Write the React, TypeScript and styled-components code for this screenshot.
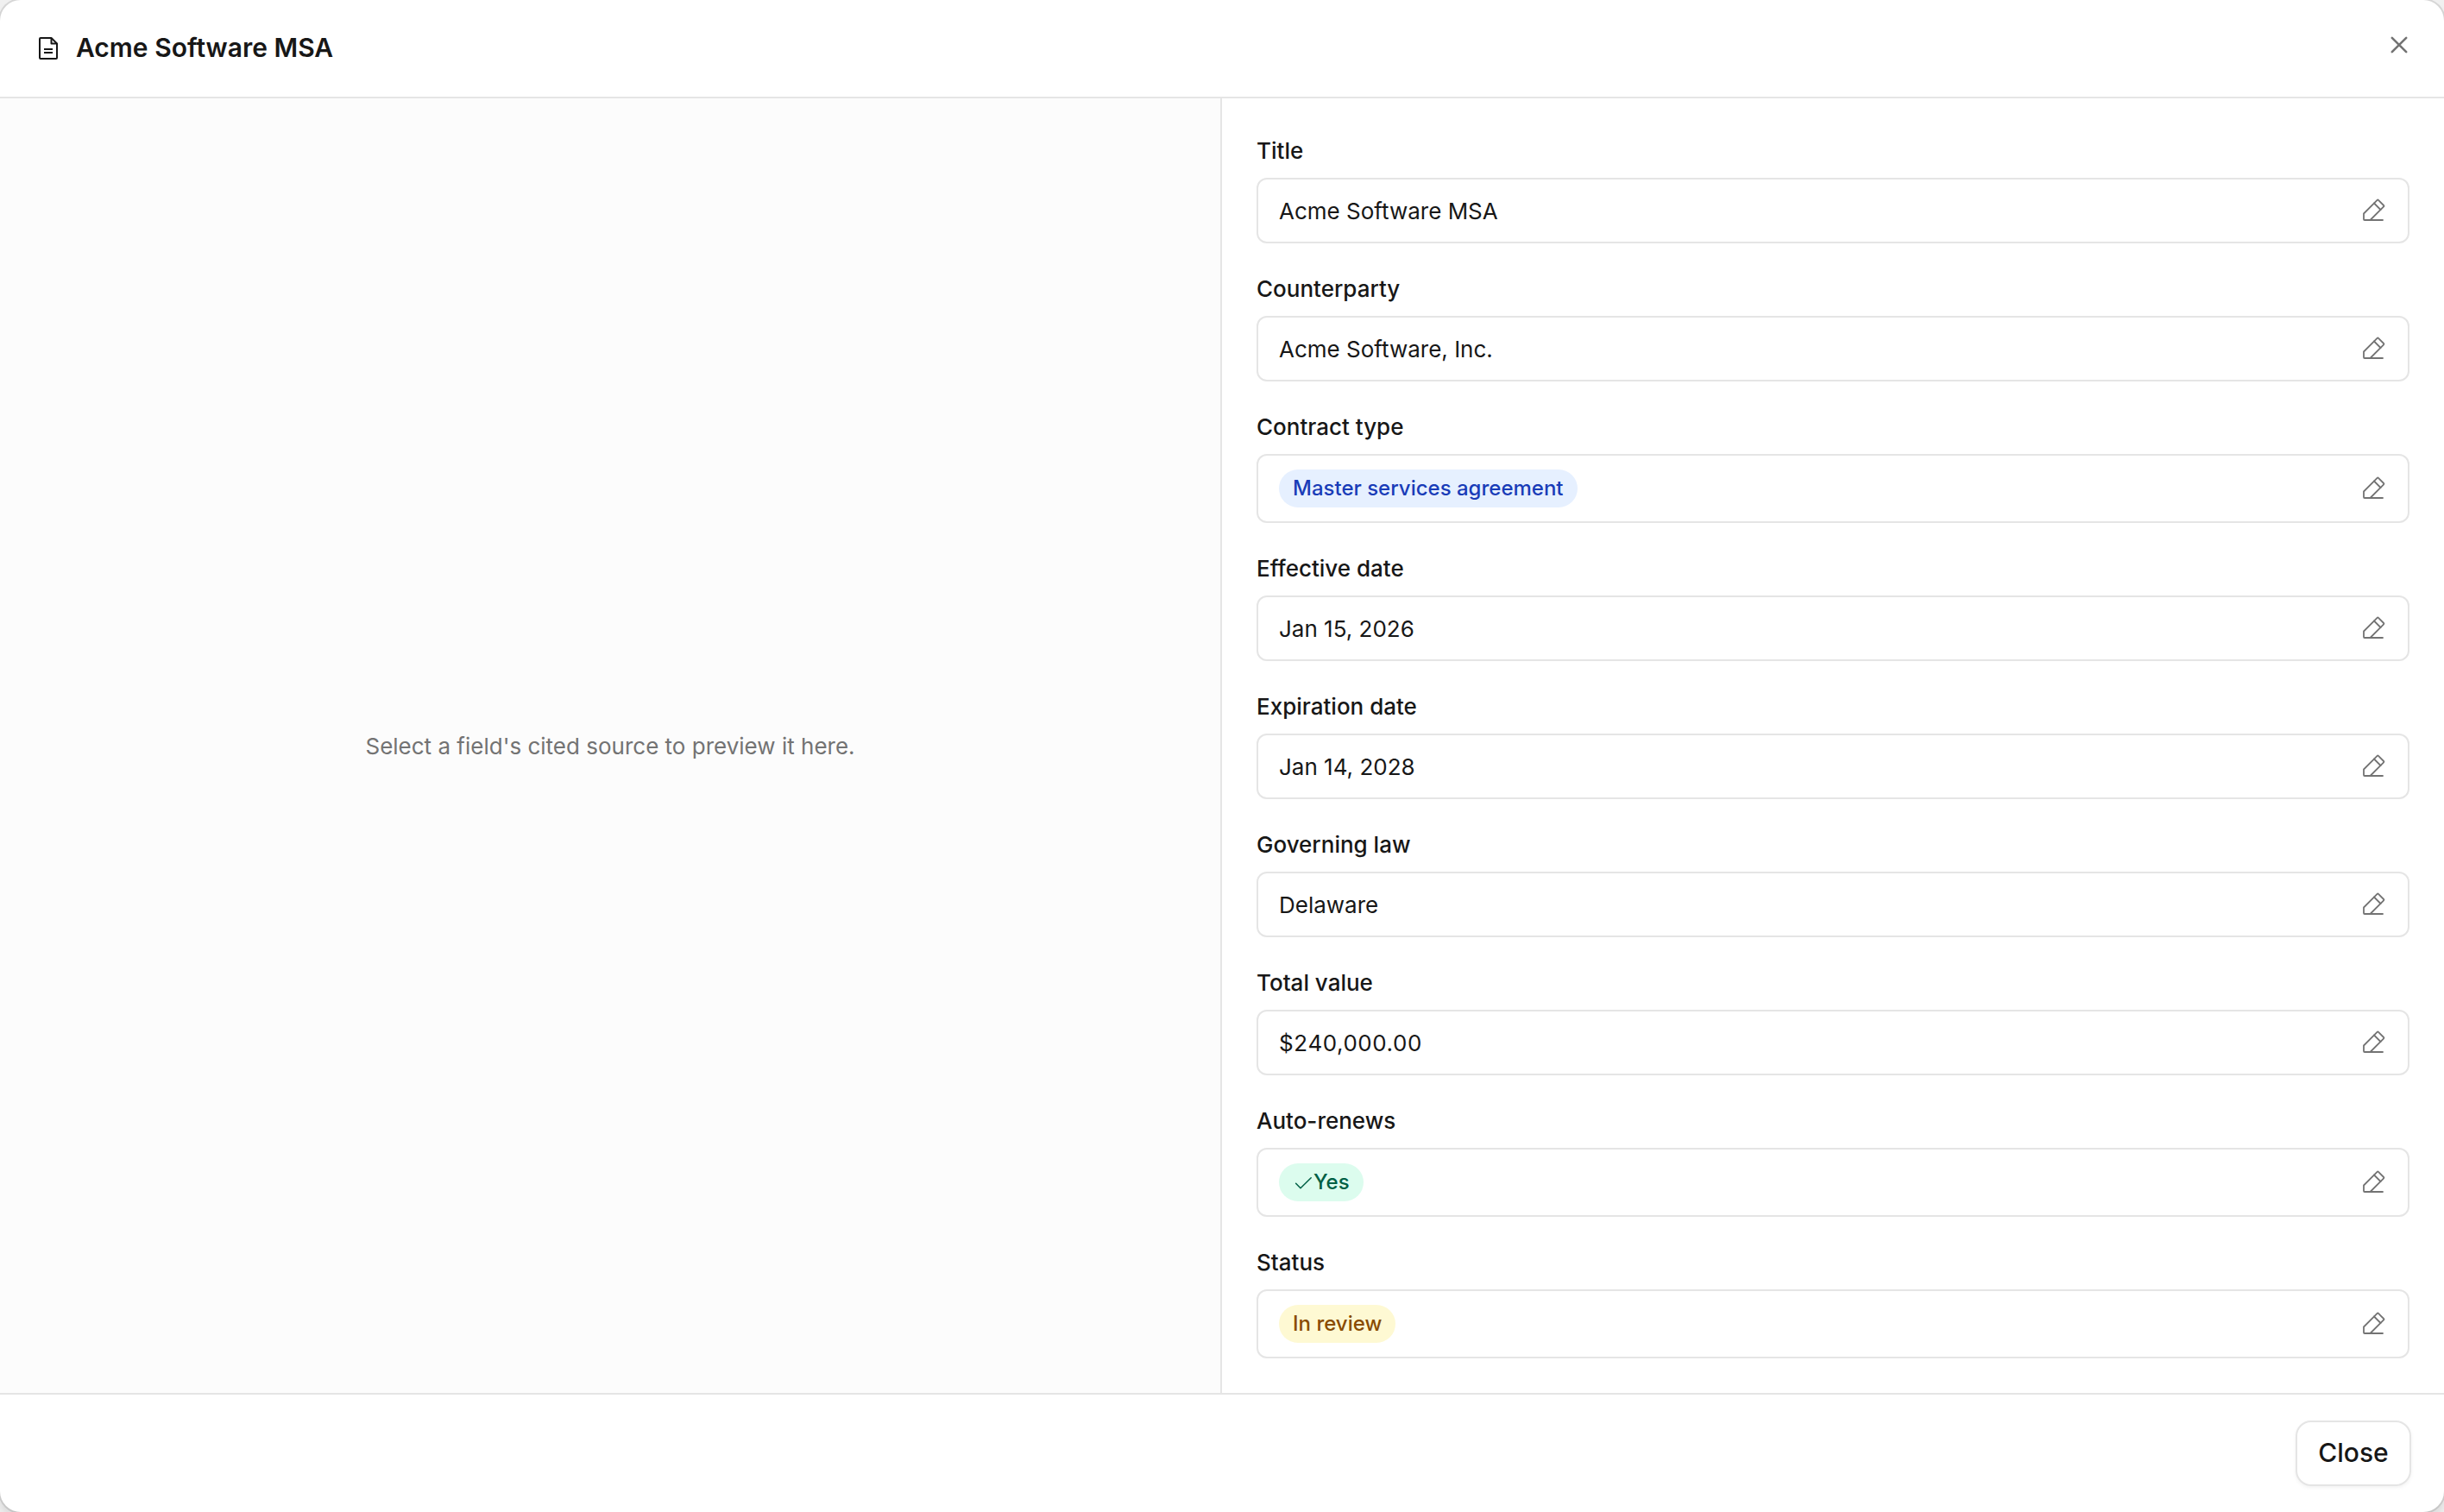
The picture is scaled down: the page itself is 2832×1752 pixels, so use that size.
import React from 'react';
import styled, { createGlobalStyle } from 'styled-components';

type Tone = 'blue' | 'green' | 'yellow';

interface ContractField {
  label: string;
  value: string;
  tone?: Tone;
  checked?: boolean;
  numeric?: boolean;
}

const colors = {
  text: '#171717',
  muted: '#737373',
  border: '#e5e5e5',
  panel: '#fcfcfc',
  surface: '#ffffff',
  backdrop: '#f0f0f0',
};

const tones: Record<Tone, { background: string; color: string }> = {
  blue: { background: '#e6f0ff', color: '#193cb8' },
  green: { background: '#dcfcee', color: '#006045' },
  yellow: { background: '#fef9d3', color: '#894b00' },
};

const fields: ContractField[] = [
  { label: 'Title', value: 'Acme Software MSA' },
  { label: 'Counterparty', value: 'Acme Software, Inc.' },
  { label: 'Contract type', value: 'Master services agreement', tone: 'blue' },
  { label: 'Effective date', value: 'Jan 15, 2026' },
  { label: 'Expiration date', value: 'Jan 14, 2028' },
  { label: 'Governing law', value: 'Delaware' },
  { label: 'Total value', value: '$240,000.00', numeric: true },
  { label: 'Auto-renews', value: 'Yes', tone: 'green', checked: true },
  { label: 'Status', value: 'In review', tone: 'yellow' },
];

const GlobalStyle = createGlobalStyle`
  *, *::before, *::after {
    box-sizing: border-box;
  }

  body {
    margin: 0;
    overflow: hidden;
    background: ${colors.backdrop};
    color: ${colors.text};
    font-family: Inter, 'Liberation Sans', sans-serif;
    -webkit-font-smoothing: antialiased;
  }
`;

const Dialog = styled.div`
  display: flex;
  flex-direction: column;
  width: 100vw;
  height: 100vh;
  border-radius: 24px;
  background: ${colors.surface};
  box-shadow: 0 0 0 2px rgba(0, 0, 0, 0.1), 0 8px 12px rgba(0, 0, 0, 0.1);
  overflow: hidden;
`;

const Header = styled.header`
  display: flex;
  justify-content: space-between;
  align-items: flex-start;
  height: 114px;
  padding: 36px 36px 0 40px;
  border-bottom: 2px solid ${colors.border};
`;

const Heading = styled.div`
  display: flex;
  align-items: center;
  gap: 16px;
  height: 40px;
`;

const Title = styled.h2`
  margin: 0;
  padding-bottom: 2px;
  font-size: 30px;
  font-weight: 600;
  line-height: 38px;
`;

const IconButton = styled.button`
  display: flex;
  padding: 0;
  border: 0;
  background: none;
  color: ${colors.muted};
  cursor: pointer;
`;

const Body = styled.div`
  display: grid;
  grid-template-columns: 1fr 1fr;
  flex: 1;
  min-height: 0;
`;

const Preview = styled.section`
  display: flex;
  align-items: center;
  justify-content: center;
  padding-top: 2px;
  border-right: 2px solid ${colors.border};
  background: ${colors.panel};
  color: ${colors.muted};
  font-size: 26px;
  line-height: 40px;
`;

const FieldList = styled.section`
  display: flex;
  flex-direction: column;
  gap: 32px;
  padding: 40px;
`;

const Field = styled.div`
  display: flex;
  flex-direction: column;
  gap: 10px;
`;

const Label = styled.div`
  font-size: 26px;
  font-weight: 500;
  line-height: 42px;
`;

const ValueBox = styled.div`
  display: flex;
  align-items: center;
  justify-content: space-between;
  padding: 16px 24px;
  border: 2px solid ${colors.border};
  border-radius: 12px;
`;

const Value = styled.span<{ $numeric?: boolean }>`
  padding-top: 2px;
  font-size: 26px;
  font-variant-numeric: ${props => props.$numeric ? 'tabular-nums' : 'normal'};
  line-height: 38px;
`;

const Badge = styled.span<{ $tone: Tone }>`
  display: inline-flex;
  align-items: center;
  height: 44px;
  padding: 0 16px;
  border-radius: 22px;
  background: ${props => tones[props.$tone].background};
  color: ${props => tones[props.$tone].color};
  font-size: 24px;
  font-weight: 500;
  line-height: 32px;
`;

const Footer = styled.footer`
  display: flex;
  align-items: flex-start;
  justify-content: flex-end;
  height: 138px;
  padding: 30px 38px 0;
  border-top: 2px solid ${colors.border};
`;

const CloseButton = styled.button`
  width: 134px;
  height: 76px;
  padding: 0 0 2px;
  border: 2px solid ${colors.border};
  border-radius: 18px;
  background: ${colors.surface};
  box-shadow: 0 2px 4px rgba(0, 0, 0, 0.05);
  color: ${colors.text};
  font-family: inherit;
  font-size: 30px;
  font-weight: 500;
  line-height: 40px;
  cursor: pointer;
`;

const DocumentIcon = () => (
  <svg width="32" height="32" viewBox="0 0 32 32" fill="none" stroke="currentColor" strokeWidth="2" strokeLinejoin="round">
    <path d="M7 4H19.5L26 10.5V27a1 1 0 0 1-1 1H7a1 1 0 0 1-1-1V5a1 1 0 0 1 1-1Z" />
    <path d="M19.5 4V10.5H26M11 17H21M11 21H21" />
  </svg>
);

const CloseIcon = () => (
  <svg width="32" height="32" viewBox="0 0 32 32" fill="none" stroke="currentColor" strokeWidth="2.6" strokeLinecap="round">
    <path d="M7.8 7.8L24.2 24.2M24.2 7.8L7.8 24.2" />
  </svg>
);

const PencilIcon = () => (
  <svg width="32" height="32" viewBox="0 0 32 32" fill="none" stroke="currentColor" strokeWidth="1.8" strokeLinecap="round" strokeLinejoin="round">
    <path d="M13 27H6a1 1 0 0 1-1-1V19.5L20.6 3.9a1 1 0 0 1 1.4 0L28.1 10a1 1 0 0 1 0 1.4L12.5 27" />
    <path d="M17 7.5L24.5 15M13 27H27" />
  </svg>
);

const CheckIcon = () => (
  <svg width="24" height="24" viewBox="0 0 24 24" fill="none" stroke="currentColor" strokeWidth="1.5" strokeLinecap="round" strokeLinejoin="round">
    <path d="M3.6 13.3L9 18.8L21.2 6.8" />
  </svg>
);

const FieldRow = ({ label, value, tone, checked, numeric }: ContractField) => (
  <Field>
    <Label>{label}</Label>
    <ValueBox>
      {tone ? (
        <Badge $tone={tone}>
          {checked && <CheckIcon />}
          {value}
        </Badge>
      ) : (
        <Value $numeric={numeric}>{value}</Value>
      )}
      <IconButton aria-label={`Edit ${label}`}>
        <PencilIcon />
      </IconButton>
    </ValueBox>
  </Field>
);

const App = () => {
  return (
    <>
      <GlobalStyle />
      <Dialog role="dialog">
        <Header>
          <Heading>
            <DocumentIcon />
            <Title>Acme Software MSA</Title>
          </Heading>
          <IconButton aria-label="Close dialog">
            <CloseIcon />
          </IconButton>
        </Header>
        <Body>
          <Preview>Select a field's cited source to preview it here.</Preview>
          <FieldList>
            {fields.map(field => (
              <FieldRow key={field.label} {...field} />
            ))}
          </FieldList>
        </Body>
        <Footer>
          <CloseButton>Close</CloseButton>
        </Footer>
      </Dialog>
    </>
  );
};

export default App;
